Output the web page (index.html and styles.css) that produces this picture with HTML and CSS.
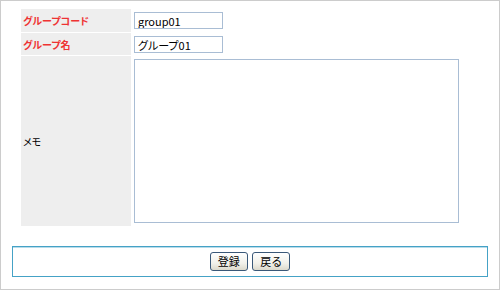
FILE: index.html
```html
<!DOCTYPE html>
<html lang="ja">
<head>
  <meta charset="UTF-8" />
  <title>グループ編集</title>
  <link rel="stylesheet" href="styles.css">
</head>
<body>
  <div class="frame">
    <div class="form">
      <div class="label required">グループコード</div>
      <div class="value"><input type="text" class="text" value="group01" /></div>

      <div class="label required">グループ名</div>
      <div class="value"><input type="text" class="text" value="グループ01" /></div>

      <div class="label">メモ</div>
      <div class="value"><textarea class="memo"></textarea></div>
    </div>

    <div class="actions">
      <button class="btn">登録</button>
      <button class="btn">戻る</button>
    </div>
  </div>
</body>
</html>
```

FILE: styles.css
```css
body {
  margin: 0;
  font-family: "Noto Sans CJK JP", "Liberation Sans", sans-serif;
  font-size: 11px;
  color: #000;
  background: #fff;
}
.frame {
  width: 500px;
  height: 290px;
  box-sizing: border-box;
  border: 1px solid #cccccc;
  padding: 8px 11px 0 11px;
}
.form {
  display: grid;
  grid-template-columns: 110px 1fr;
  row-gap: 1px;
  margin-left: 9px;
  width: 458px;
}
.label {
  background: #eeeeee;
  display: flex;
  align-items: center;
  padding-left: 2px;
  font-size: 10px;
  font-feature-settings: "palt";
}
.required {
  color: #ee3333;
  font-weight: bold;
}
.value {
  padding: 3px;
  line-height: 0;
}
.text {
  width: 89px;
  height: 17px;
  box-sizing: border-box;
  border: 1px solid #a9bdd4;
  padding: 0 3px;
  margin: 0;
  font-family: inherit;
  font-size: 11px;
  font-feature-settings: "palt";
}
.value:nth-child(2) {
  height: 17px;
}
.value:nth-child(4) {
  height: 16px;
}
.memo {
  width: 325px;
  height: 164px;
  box-sizing: border-box;
  border: 1px solid #a9bdd4;
  margin: 0;
  resize: none;
}
.actions {
  margin-top: 20px;
  height: 31px;
  box-sizing: border-box;
  border: 1px solid #45a2c6;
  box-shadow: inset 0 1px 0 #b8dcea;
  text-align: center;
  padding-top: 5px;
}
.btn {
  height: 19px;
  padding: 0 7px;
  margin: 0 1px;
  font-family: inherit;
  font-size: 11px;
  line-height: 15px;
  border: 1px solid #3a5878;
  border-radius: 3px;
  background: linear-gradient(#ffffff, #f2f1ea 60%, #dcd9cc);
  color: #000;
  cursor: pointer;
}
```
